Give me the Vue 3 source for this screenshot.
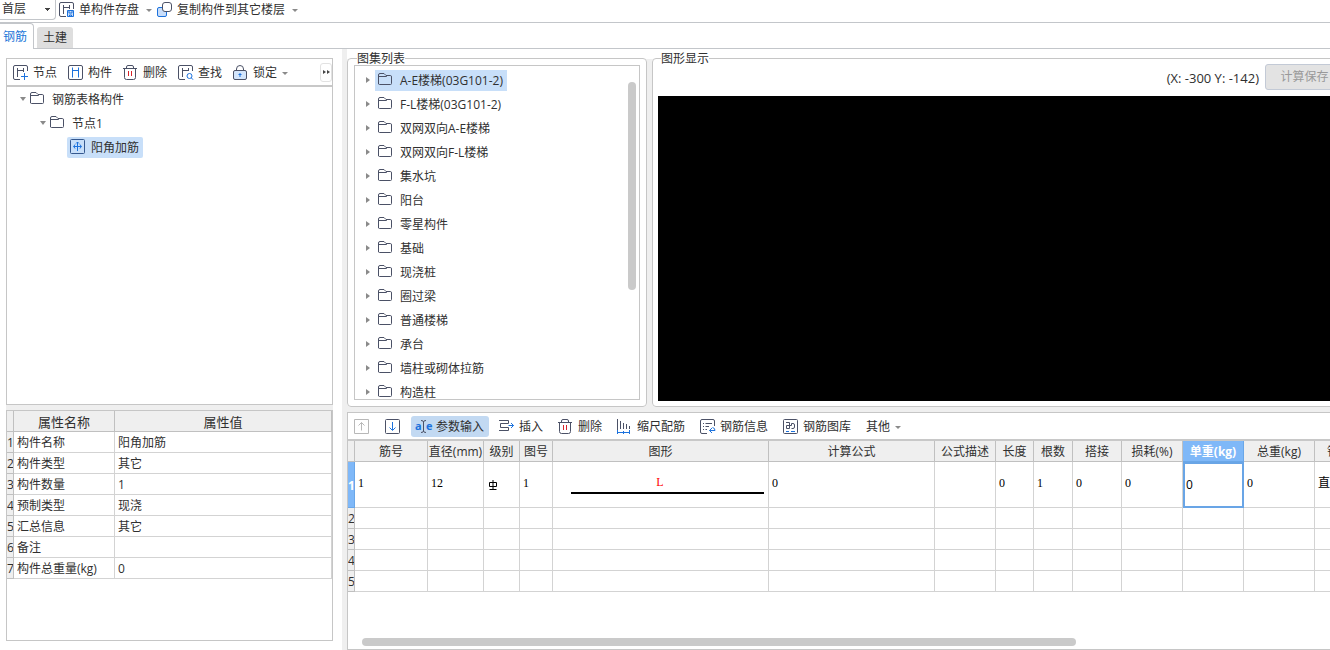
<script setup>
import { ref } from 'vue'

const mainTools = [
  { icon: 'save', label: '单构件存盘' },
  { icon: 'copy', label: '复制构件到其它楼层' },
]
const treeTools = [
  { icon: 'node', label: '节点' },
  { icon: 'member', label: '构件' },
  { icon: 'trash', label: '删除' },
  { icon: 'find', label: '查找' },
  { icon: 'lock', label: '锁定', menu: true },
]
const gridTools = [
  { icon: 'params', label: '参数输入', active: true },
  { icon: 'insert', label: '插入' },
  { icon: 'trash', label: '删除' },
  { icon: 'scale', label: '缩尺配筋' },
  { icon: 'info', label: '钢筋信息' },
  { icon: 'library', label: '钢筋图库' },
  { label: '其他', menu: true },
]
const atlas = [
  'A-E楼梯(03G101-2)', 'F-L楼梯(03G101-2)', '双网双向A-E楼梯', '双网双向F-L楼梯',
  '集水坑', '阳台', '零星构件', '基础', '现浇桩', '圈过梁', '普通楼梯', '承台',
  '墙柱或砌体拉筋', '构造柱',
]
const properties = [
  ['构件名称', '阳角加筋'],
  ['构件类型', '其它'],
  ['构件数量', '1'],
  ['预制类型', '现浇'],
  ['汇总信息', '其它'],
  ['备注', ''],
  ['构件总重量(kg)', '0'],
]
const columns = [
  { title: '筋号', width: 73, value: '1' },
  { title: '直径(mm)', width: 56, value: '12' },
  { title: '级别', width: 36, kind: 'grade' },
  { title: '图号', width: 33, value: '1' },
  { title: '图形', width: 216, kind: 'shape' },
  { title: '计算公式', width: 166, value: '0' },
  { title: '公式描述', width: 61, value: '' },
  { title: '长度', width: 38, value: '0' },
  { title: '根数', width: 39, value: '1' },
  { title: '搭接', width: 49, value: '0' },
  { title: '损耗(%)', width: 61, value: '0' },
  { title: '单重(kg)', width: 61, value: '0', current: true },
  { title: '总重(kg)', width: 71, value: '0' },
  { title: '钢筋归类', width: 73, value: '直筋', kind: 'text' },
]
const tab = ref('钢筋')
const selected = ref(atlas[0])
</script>

<template>
  <svg class="defs" aria-hidden="true">
    <symbol id="i-save" viewBox="0 0 15 15">
      <path class="d" d="M7 14.5H2Q.5 14.5 .5 13V2Q.5 .5 2 .5H13Q14.5 .5 14.5 2V7M4.500 3V12M10.500 3V7M4.500 5.500H10.500" />
      <path class="bf" d="M8.500 8.500H14.500V14.500H8.500Z" /><path class="b" d="M10 8.500V11H13V8.500M10.500 14.500V13H12.500V14.500" />
    </symbol>
    <symbol id="i-copy" viewBox="0 0 15 15">
      <rect class="bf" x=".5" y="5.500" width="9" height="9" rx="1.500" />
      <rect class="dw" x="5.500" y=".5" width="9" height="9" rx="2.500" />
    </symbol>
    <symbol id="i-node" viewBox="0 0 15 15">
      <path class="d" d="M7 14.500H2Q.5 14.500 .5 13V2Q.5 .5 2 .5H13Q14.500 .5 14.500 2V6M4.500 3V12M10.500 3V7M4.500 5.500H10.500" />
      <path class="b" d="M11.500 8V15M8 11.500H15" />
    </symbol>
    <symbol id="i-member" viewBox="0 0 15 15">
      <rect class="d" x=".5" y=".5" width="14" height="14" rx="1.500" />
      <path class="b" d="M4.500 2.500V12.500M10.500 2.500V12.500M4.500 5.500H10.500" />
    </symbol>
    <symbol id="i-trash" viewBox="0 0 15 15">
      <path class="d" d="M0 3.500H14M3.500 3V2Q3.500 .5 5 .5H9Q10.500 .5 10.500 2V3M1.500 3.500V12.500Q1.500 14.500 3.500 14.500H10.500Q12.500 14.500 12.500 12.500V3.500" />
      <path class="r" d="M5.500 6V11M8.500 6V11" />
    </symbol>
    <symbol id="i-find" viewBox="0 0 15 15">
      <path class="d" d="M7 14.500H2Q.5 14.500 .5 13V2Q.5 .5 2 .5H13Q14.500 .5 14.500 2V6M4.500 3V12M10.500 3V6M4.500 5.500H10.500" />
      <circle class="bs" cx="11.500" cy="11" r="2.500" /><path class="bs" d="M13.300 12.800L15 14.700" />
    </symbol>
    <symbol id="i-lock" viewBox="0 0 15 15">
      <path class="d" d="M3.500 5.500V4Q3.500 .5 7 .5Q10.500 .5 10.500 4V5.500" />
      <rect class="dl" x=".5" y="5.500" width="13" height="9" rx="1.500" />
      <path class="b2" d="M7 8V12M5.500 9.500H8.500" />
    </symbol>
    <symbol id="i-folder" viewBox="0 0 15 15">
      <path class="d" d="M.5 12V3Q.5 1.500 2 1.500H6L8 3.500H12.500Q13.500 3.500 13.500 5V11.500Q13.500 12.500 12.500 12.500H1.500Q.5 12.500 .5 11.500ZM.5 4.500H8.500L9.500 3.500" />
    </symbol>
    <symbol id="i-bar" viewBox="0 0 15 15">
      <rect class="n" x=".5" y=".5" width="14" height="14" rx="1" />
      <path class="bs" d="M7.500 3V12M3.500 7.500H11.500M5 5.500Q2.500 7.500 5 9.500M10 5.500Q12.500 7.500 10 9.500M6 4.500L7.500 3L9 4.500" />
    </symbol>
    <symbol id="i-up" viewBox="0 0 15 15">
      <path class="g" d="M.5 .5H14.500V14.500H.5ZM7.500 11.500V3.500M4.500 6.500L7.500 3.500L10.500 6.500" />
    </symbol>
    <symbol id="i-down" viewBox="0 0 15 15">
      <rect class="d" x=".5" y=".5" width="14" height="14" rx="1" />
      <path class="b" d="M7.500 3V11M4.500 8.500L7.500 11.500L10.500 8.500" />
    </symbol>
    <symbol id="i-params" viewBox="0 0 15 15">
      <text class="glyph" x="-1" y="11">a</text><text class="glyph" x="10" y="11">e</text>
      <path class="d" d="M5 1.500Q7.500 1.500 7.500 3V12Q7.500 13.500 10 13.500M10 1.500Q7.500 1.500 7.500 3M5 13.500Q7.500 13.500 7.500 12" />
    </symbol>
    <symbol id="i-insert" viewBox="0 0 15 15">
      <path class="d" d="M0 1.500H9.500M0 11.500H9.500M9.500 4.500H1.500V8.500H9.500M9.500 1.500V4.500M9.500 8.500V11.500" />
      <path class="b" d="M9.500 6.500H14.500M12 4L14.500 6.500L12 9" />
    </symbol>
    <symbol id="i-scale" viewBox="0 0 15 15">
      <path class="d" d="M.5 0V11M3.500 2V10M6.500 4V10M9.500 5V10M12.500 7V10" />
      <path class="b" d="M.5 11V15M12.500 11V15M.5 13.500H12.500M6.500 12V15" />
    </symbol>
    <symbol id="i-info" viewBox="0 0 15 15">
      <path class="d" d="M7 14.500H2Q.5 14.500 .5 13V2Q.5 .5 2 .5H13Q14.500 .5 14.500 2V7M3 4.500H4M5.500 4.500H12M3 7.500H4M5.500 7.500H9M3 10.500H4M5.500 10.500H7" />
      <path class="b" d="M12.500 8.500Q15 9 15 11.500H9.500M12 9L9.500 11.500L12 14" />
    </symbol>
    <symbol id="i-library" viewBox="0 0 15 15">
      <rect class="d" x=".5" y=".5" width="14" height="14" rx="1" />
      <path class="d" d="M3 3.500H6.500V9.500H3.500V6.500H6.500M6.500 6.500H8.500V4.500H10Q11.500 4.500 11.500 6V8Q11.500 9.500 10 9.500H8.500" />
      <path class="b" d="M3 12.500H6M8 12.500H12" />
    </symbol>
    <symbol id="i-grade" viewBox="0 0 11 11">
      <path class="k" d="M1.500 3.500H8.500V7.500H1.500ZM5 1V10.500M1.500 10.500H8.500" />
    </symbol>
  </svg>

  <div class="app">
    <header class="topbar">
      <select class="floor" aria-label="楼层"><option>首层</option></select>
      <button v-for="t in mainTools" :key="t.icon" class="tool">
        <svg class="icon"><use :href="'#i-' + t.icon" /></svg>{{ t.label }}<i class="caret"></i>
      </button>
    </header>
    <nav class="tabs">
      <button v-for="t in ['钢筋', '土建']" :key="t" class="tab" :class="{ on: tab === t }" @click="tab = t">{{ t }}</button>
    </nav>

    <main class="body">
      <aside class="side">
        <section class="treebox">
          <div class="treetools">
            <button v-for="t in treeTools" :key="t.icon" class="tool">
              <svg class="icon"><use :href="'#i-' + t.icon" /></svg>{{ t.label }}<i v-if="t.menu" class="caret"></i>
            </button>
            <button class="more" aria-label="更多"><i></i><i></i></button>
          </div>
          <ul class="tree">
            <li class="row"><i class="open"></i><span class="item"><svg class="icon"><use href="#i-folder" /></svg>钢筋表格构件</span></li>
            <li class="row level2"><i class="open"></i><span class="item"><svg class="icon"><use href="#i-folder" /></svg>节点1</span></li>
            <li class="row level3"><span class="item picked"><svg class="icon"><use href="#i-bar" /></svg>阳角加筋</span></li>
          </ul>
        </section>
        <section class="props">
          <table>
            <colgroup><col class="c-no" /><col class="c-name" /><col /></colgroup>
            <thead><tr><th></th><th>属性名称</th><th>属性值</th></tr></thead>
            <tbody>
              <tr v-for="(p, i) in properties" :key="i"><th>{{ i + 1 }}</th><td>{{ p[0] }}</td><td>{{ p[1] }}</td></tr>
            </tbody>
          </table>
        </section>
      </aside>

      <div class="work">
        <div class="upper">
          <fieldset class="group atlas">
            <legend>图集列表</legend>
            <div class="listbox">
              <ul>
                <li v-for="a in atlas" :key="a" class="row" @click="selected = a">
                  <i class="shut"></i>
                  <span class="item" :class="{ picked: selected === a }"><svg class="icon"><use href="#i-folder" /></svg>{{ a }}</span>
                </li>
              </ul>
              <div class="vthumb"></div>
            </div>
          </fieldset>
          <fieldset class="group view">
            <legend>图形显示</legend>
            <div class="viewbar"><span>(X: -300 Y: -142)</span><button class="calc" disabled>计算保存</button></div>
            <div class="canvas"></div>
          </fieldset>
        </div>

        <section class="lower">
          <div class="gridtools">
            <button class="tool move" disabled aria-label="上移"><svg class="icon"><use href="#i-up" /></svg></button>
            <button class="tool move" aria-label="下移"><svg class="icon"><use href="#i-down" /></svg></button>
            <button v-for="t in gridTools" :key="t.label" class="tool" :class="{ active: t.active }">
              <svg v-if="t.icon" class="icon"><use :href="'#i-' + t.icon" /></svg>{{ t.label }}<i v-if="t.menu" class="caret"></i>
            </button>
          </div>
          <table class="bars">
            <colgroup>
              <col class="c-no" />
              <col v-for="c in columns" :key="c.title" :style="{ width: c.width + 'px' }" />
            </colgroup>
            <thead>
              <tr><th></th><th v-for="c in columns" :key="c.title" :class="{ current: c.current }">{{ c.title }}</th></tr>
            </thead>
            <tbody>
              <tr class="first">
                <th class="current">1</th>
                <td v-for="c in columns" :key="c.title" :class="[c.kind, { focus: c.current }]">
                  <svg v-if="c.kind === 'grade'" class="grade-mark"><use href="#i-grade" /></svg>
                  <div v-else-if="c.kind === 'shape'" class="shape-line">L</div>
                  <template v-else>{{ c.value }}</template>
                </td>
              </tr>
              <tr v-for="n in 4" :key="n"><th>{{ n + 1 }}</th><td v-for="c in columns" :key="c.title"></td></tr>
            </tbody>
          </table>
          <div class="hthumb"></div>
        </section>
      </div>
    </main>
  </div>
</template>

<style>
html, body, #app { height: 100%; }
body { overflow: hidden; background: #fff; }
</style>

<style scoped>
.defs { position: absolute; width: 0; height: 0; }
.d, .dw, .dl, .b, .bf, .b2, .bs, .r, .n, .g, .k { fill: none; stroke-width: 1; }
.d, .dw, .dl { stroke: #4b5166; }
.dw { fill: #fff; }
.dl { fill: #d3e5fb; }
.b, .bf, .b2, .bs { stroke: #1c72dd; }
.bf { fill: #c9defa; }
.r { stroke: #d8232a; }
.n { stroke: #35588f; }
.g { stroke: #b8b8b8; }
.k { stroke: #000; }
.glyph { font: bold 11px "Open Sans", sans-serif; fill: #1c72dd; }

.app {
  height: 100%;
  display: flex;
  flex-direction: column;
  font: 12px/18px "Open Sans", "Noto Sans CJK SC", sans-serif;
  color: #303030;
  white-space: nowrap;
}
button, select { font: inherit; color: inherit; background: none; border: 0; margin: 0; padding: 0; }
ul { list-style: none; margin: 0; padding: 0; }
.icon { width: 15px; height: 15px; flex: none; overflow: visible; }
symbol { overflow: visible; }

.tool { display: flex; align-items: center; gap: 5px; box-sizing: border-box; height: 21px; padding-top: 2px; }
.tool .icon { margin-bottom: 2px; }
.caret {
  width: 0; height: 0;
  border: 3px solid transparent; border-top-color: #8a8a8a; border-bottom: 0;
}

.topbar { display: flex; align-items: flex-start; gap: 5px; height: 22px; border-bottom: 1px solid #c3c6ca; }
.topbar .tool { height: 18px; }
.topbar .caret { margin-left: 2px; }
.floor {
  appearance: none;
  width: 56px; height: 20px; padding: 0 0 2px 2px; margin-right: -2px;
  border: 1px solid #c3c6ca; border-width: 0 1px 1px 0; border-radius: 0 0 4px 0;
  background: linear-gradient(#444, #444) 45px 8px / 5px 1px no-repeat,
    linear-gradient(#444, #444) 46px 9px / 3px 1px no-repeat,
    linear-gradient(#444, #444) 47px 10px / 1px 1px no-repeat;
}

.tabs { display: flex; align-items: flex-end; height: 25px; border-bottom: 1px solid #c3c6ca; }
.tab { width: 36px; height: 21px; margin-left: 3px; border-radius: 3px 3px 0 0; background: #dedede; }
.tab.on {
  width: 34px; height: 26px; margin: 0 0 -1px; padding-right: 3px;
  background: #fff; border-top: 1px solid #c3c6ca; border-right: 1px solid #c3c6ca; color: #1a76d8;
  border-radius: 0 4px 0 0;
}

.body { flex: 1; min-height: 0; display: flex; overflow: hidden; }
.side { flex: none; width: 327px; padding: 9px 9px 9px 6px; display: flex; flex-direction: column; }
.treebox { flex: 1; min-height: 0; border: 1px solid #c6c6c6; }
.treetools {
  display: flex; align-items: center; gap: 11px; height: 26px; padding: 0 0 0 6px;
  border-bottom: 2px solid #c8c8c8;
}
.more {
  display: flex; align-items: center; justify-content: center; gap: 1px;
  width: 12px; height: 19px; margin-left: auto; border: 1px solid #e2e2e2; border-radius: 3px;
}
.more i { border: 2px solid transparent; border-left: 3px solid #444; border-right: 0; }
.row { display: flex; align-items: center; height: 24px; }
.item {
  display: flex; align-items: center; gap: 7px; box-sizing: border-box; height: 21px;
  padding: 2px 4px 0 3px;
}
.item .icon { margin-bottom: 3px; }
.picked { background: #c8dff9; }
.tree { padding-left: 13px; }
.tree .picked { border-radius: 2px; gap: 6px; }
.level2 { padding-left: 20px; }
.level3 { padding-left: 47px; }
.open { width: 0; border: 3px solid transparent; border-top: 4px solid #8a8a8a; border-bottom: 0; margin-right: 1px; }
.shut { width: 0; border: 3px solid transparent; border-left: 4px solid #8a8a8a; border-right: 0; margin: 0 5px 0 1px; }

.props { flex: none; height: 229px; border: 1px solid #c6c6c6; box-shadow: 0 -5px #efefef; margin-top: 5px; }
table { border-collapse: separate; border-spacing: 0; table-layout: fixed; }
th, td {
  box-sizing: border-box; height: 21px; padding: 2px 3px 0; text-align: left; overflow: hidden;
  line-height: 18px; font-weight: normal;
  border: 0 solid #d3d3d3; border-right-width: 1px; border-bottom-width: 1px;
}
th { background: #efefef; border-color: #c0c0c0; padding: 2px 0 0; text-align: center; }
tbody th { text-align: left; }
.c-no { width: 7px; }
.c-name { width: 101px; }
.props table { width: 100%; }
.props thead th { font-size: 13px; }

.work { flex: 1; min-width: 0; margin-right: -20px; padding-left: 5px; display: flex; flex-direction: column; background: #efefef; }
.upper {
  flex: 1; min-height: 0; display: flex; gap: 5px;
  background: linear-gradient(#fff, #fff) 0 0 / 100% 10px no-repeat, #efefef;
}
.group {
  box-sizing: border-box; min-width: 0; margin: 2px 0 0; padding: 0 6px 6px;
  border: 1px solid #c6c6c6; border-radius: 4px; background: #fff;
  display: flex; flex-direction: column;
}
.group legend { height: 14px; line-height: 15px; padding: 0; margin-left: 3px; background: #fff; }
.atlas { flex: none; width: 300px; }
.listbox { position: relative; box-sizing: border-box; height: 335px; border: 1px solid #c6c6c6; padding: 2px 0 0 10px; overflow: hidden; }
.vthumb { position: absolute; right: 3px; top: 16px; width: 8px; height: 208px; border-radius: 4px; background: #cacaca; }
.view { flex: 1; padding: 0 5px 5px; }
.viewbar { display: flex; align-items: center; justify-content: flex-end; gap: 6px; height: 31px; }
.viewbar span { padding-bottom: 6px; font-size: 13px; }
.calc {
  box-sizing: border-box; width: 79px; height: 26px; margin-bottom: 7px;
  border: 1px solid #c3cad6; border-radius: 3px; background: #e3e3e3; color: #999;
}
.canvas { height: 305px; background: #000; }

.lower {
  position: relative; flex: none; height: 236px; margin-top: 5px;
  border: 1px solid #c6c6c6; background: #fff; overflow: hidden;
}
.gridtools { display: flex; align-items: center; gap: 5px; height: 26px; padding: 0 1px; border-bottom: 2px solid #c8c8c8; }
.gridtools .tool { padding: 2px 5px 0; }
.gridtools .move { padding-right: 6px; }
.gridtools .active { background: #c2d9f2; border-radius: 3px; }
.bars { width: 1040px; }
.bars th.current { background: #7fb8f8; color: #fff; font-weight: bold; border-color: #6aa7e8; }
.first td, .first th { height: 46px; }
.first td { padding: 0 3px 3px; font-family: "Liberation Serif", "Noto Sans CJK SC", serif; color: #000; }
.first td.focus { padding-bottom: 0; font-family: inherit; outline: 2px solid #69a5e6; outline-offset: -2px; }
.grade-mark { display: block; width: 11px; height: 11px; margin-left: 1px; }
.first .grade { padding-bottom: 0; }
.first .shape { padding: 0 0 3px; }
.shape-line { margin: 0 4px 0 18px; padding-right: 15px; border-bottom: 2px solid #000; text-align: center; line-height: 20px; color: #f00; }
.hthumb { position: absolute; left: 14px; bottom: 3px; width: 714px; height: 8px; border-radius: 4px; background: #cacaca; }
</style>
